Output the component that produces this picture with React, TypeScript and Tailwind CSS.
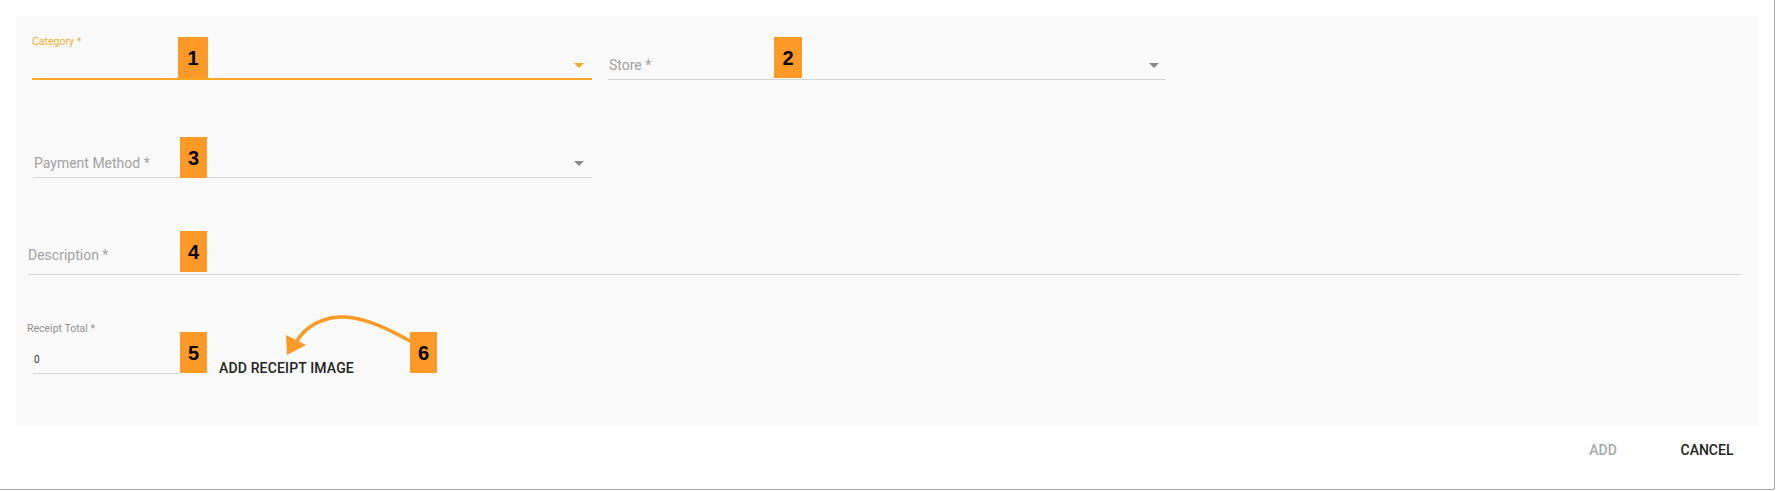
import React from 'react';

// annotation badges laid over the form
const badges = [
  { n: '1', cls: 'left-[178px] top-[37px] w-[30px]' },
  { n: '2', cls: 'left-[774px] top-[37px] w-[28px]' },
  { n: '3', cls: 'left-[180px] top-[137px] w-[27px]' },
  { n: '4', cls: 'left-[180px] top-[231px] w-[27px]' },
  { n: '5', cls: 'left-[180px] top-[332px] w-[27px]' },
  { n: '6', cls: 'left-[410px] top-[332px] w-[27px]' },
];

function DropArrow({ color }: { color: string }) {
  return (
    <svg viewBox="0 0 24 24" className="w-[24px] h-[24px] shrink-0">
      <path d="M7 10l5 5 5-5z" fill={color} />
    </svg>
  );
}

export default function App() {
  return (
    <div className="relative w-[1776px] h-[491px] bg-white font-['Roboto',sans-serif]">
      <div className="w-[1775px] h-[490px] bg-white border-r border-b border-[#ababab] rounded-br-[3px] pt-[16px] pl-[16px]">
        <div className="w-[1743px] h-[410px] bg-[#fafafa] pl-[16px] pt-[16px] flex flex-col">
          {/* Category / Store */}
          <div className="flex gap-[16px]">
            <div className="w-[560px] h-[48px] border-b-2 border-[#f9a825] flex flex-col">
              <label className="pt-[4px] text-[10.5px] leading-[12px] text-[#f7ae2e]">Category *</label>
              <div className="flex-1 flex justify-end items-end pb-[1px] mr-[1px]">
                <DropArrow color="#f9a825" />
              </div>
            </div>
            <div className="w-[558px] h-[48px] border-b border-[#d6d6d6] flex items-end justify-between pb-[4px] pl-[1px]">
              <span className="text-[14px] leading-[20px] text-[#a2a2a2]">Store *</span>
              <div className="mb-[-2px]">
                <DropArrow color="#8a8a8a" />
              </div>
            </div>
          </div>

          {/* Payment Method */}
          <div className="mt-[50px] ml-[1px] w-[559px] h-[48px] border-b border-[#d6d6d6] flex items-end justify-between pb-[4px] pl-[1px]">
            <span className="text-[14px] leading-[20px] text-[#a2a2a2]">Payment Method *</span>
            <div className="mb-[-2px] mr-[1px]">
              <DropArrow color="#8a8a8a" />
            </div>
          </div>

          {/* Description */}
          <div className="mt-[49px] -ml-[4px] w-[1714px] h-[48px] border-b border-[#d6d6d6] flex items-end pb-[9px]">
            <span className="text-[14px] leading-[20px] text-[#a2a2a2]">Description *</span>
          </div>

          {/* Receipt total + image */}
          <div className="mt-[45px] flex items-start">
            <div className="-ml-[5px] flex flex-col">
              <label className="pt-[3px] text-[10.5px] leading-[12px] text-[#8f8f8f]">Receipt Total *</label>
              <div className="ml-[6px] w-[146px] h-[39px] border-b border-[#d6d6d6] flex items-end pb-[7px] pl-[1px]">
                <span className="text-[10px] leading-[12px] text-[#333]">0</span>
              </div>
            </div>
            <button className="mt-[30px] ml-[32px] h-[36px] px-[8px] flex items-center text-[14px] leading-[20px] font-medium tracking-[0.15px] text-[#222]">
              ADD RECEIPT IMAGE
            </button>
          </div>
        </div>

        {/* Actions */}
        <div className="flex justify-end gap-[38px] pr-[33px] pt-[6px]">
          <button className="w-[64px] h-[36px] flex items-center justify-center text-[14px] font-medium text-[#a8a8a8]">ADD</button>
          <button className="w-[68px] h-[36px] flex items-center justify-center text-[14px] font-medium text-[#222]">CANCEL</button>
        </div>
      </div>

      {/* annotations */}
      {badges.map((b) => (
        <div
          key={b.n}
          className={`absolute h-[41px] bg-[#fd9a27] flex items-center justify-center font-['Liberation_Sans',Arial,sans-serif] font-bold text-[20px] text-black ${b.cls}`}
        >
          {b.n}
        </div>
      ))}
      <svg className="absolute left-0 top-0 w-[1776px] h-[491px] pointer-events-none" viewBox="0 0 1776 491">
        <path
          d="M410 341 C 385 327, 356 313, 331 318 C 313 322, 303 331, 297 341"
          fill="none"
          stroke="#fd9a27"
          strokeWidth="3.5"
          strokeLinecap="round"
        />
        <polygon points="287,355 286,335 306,345" fill="#fd9a27" />
      </svg>
    </div>
  );
}
